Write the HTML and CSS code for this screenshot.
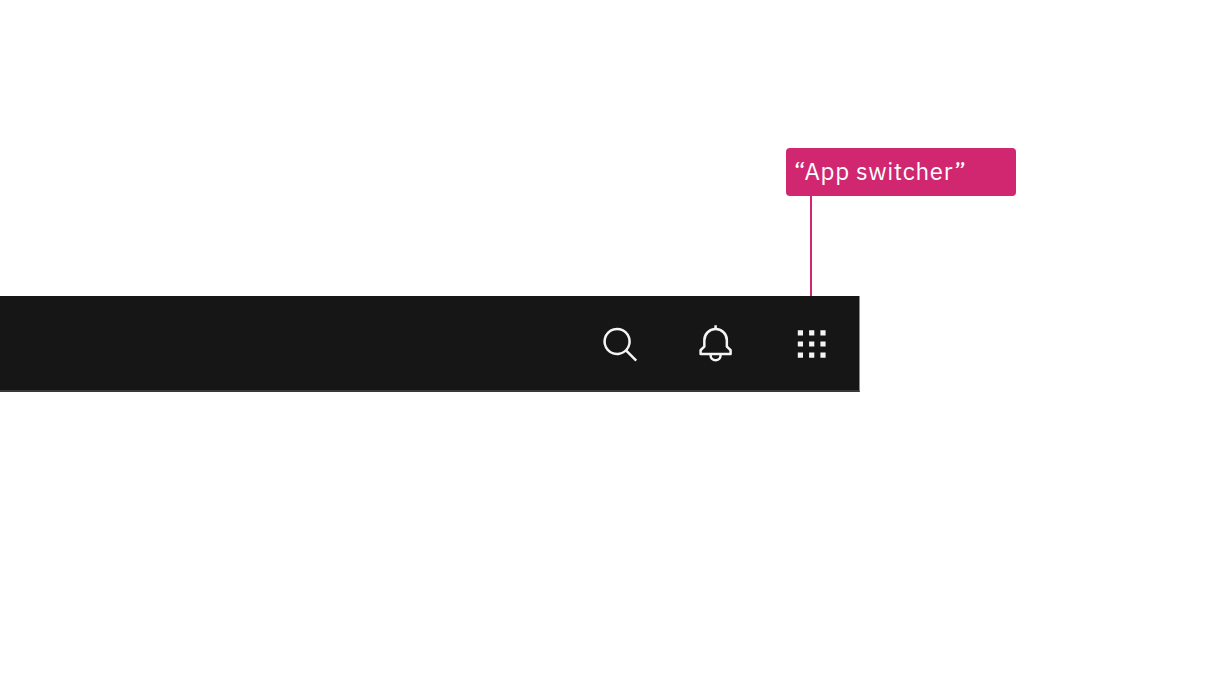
FILE: index.html
```html
<!DOCTYPE html>
<html lang="en">
<head>
<meta charset="utf-8">
<title>App switcher</title>
<link rel="stylesheet" href="styles.css">
</head>
<body>
<main class="stage">
  <div class="callout">
    <div class="callout-label">“App switcher”</div>
    <div class="callout-line"></div>
  </div>
  <header class="shell-header">
    <svg class="icon" viewBox="0 0 32 32"><path d="M30,28.59,22.45,21A11,11,0,1,0,21,22.45L28.59,30ZM5,14a9,9,0,1,1,9,9A9,9,0,0,1,5,14Z"/></svg>
    <svg class="icon" viewBox="0 0 32 32"><path d="M28.7071,20.293L26,17.5859V13a10.0136,10.0136,0,0,0-9-9.9492V1H15V3.0508A10.0136,10.0136,0,0,0,6,13v4.5859L3.2929,20.293A1,1,0,0,0,3,21v3a1,1,0,0,0,1,1h7a5,5,0,0,0,10,0h7a1,1,0,0,0,1-1V21A1,1,0,0,0,28.7071,20.293ZM19,25a3,3,0,0,1-6,0ZM27,23H5V21.4141L7.707,18.707A1,1,0,0,0,8,18V13a8,8,0,0,1,16,0V18a1,1,0,0,0,.293.707L27,21.4141Z"/></svg>
    <svg class="icon" viewBox="0 0 40 40"><path d="M6.2 6.3h5.2v5.2H6.2zM17.5 6.3h5.2v5.2h-5.2zM28.8 6.3H34v5.2h-5.2zM6.2 17.4h5.2v5.2H6.2zM17.5 17.4h5.2v5.2h-5.2zM28.8 17.4H34v5.2h-5.2zM6.2 28.5h5.2v5.2H6.2zM17.5 28.5h5.2v5.2h-5.2zM28.8 28.5H34v5.2h-5.2z"/></svg>
  </header>
</main>
</body>
</html>
```
FILE: styles.css
```css
body {
  margin: 0;
  background: #fff;
}

.stage {
  box-sizing: border-box;
  width: 1216px;
  height: 688px;
  padding-top: 148px;
  overflow: hidden;
}

.callout {
  width: 230px;
  margin-left: 786px;
}

.callout-label {
  box-sizing: border-box;
  height: 48px;
  padding-left: 8px;
  border-radius: 4px;
  background: #d12771;
  color: #fff;
  font: 400 24px/46px "IBM Plex Sans", "Open Sans", sans-serif;
  letter-spacing: 0.64px;
  white-space: nowrap;
}

.callout-line {
  width: 2px;
  height: 100px;
  margin-left: 24px;
  background: #d12771;
}

.shell-header {
  box-sizing: border-box;
  display: flex;
  align-items: center;
  justify-content: flex-end;
  gap: 56px;
  width: 860px;
  height: 96px;
  padding: 2px 28px 0 0;
  border-right: 1px solid #8b8b8b;
  border-bottom: 2px solid #393939;
  background: #161616;
}

.icon {
  display: block;
  flex: none;
  width: 40px;
  height: 40px;
  fill: #f4f4f4;
  transform: translateX(0.6px);
}
```
